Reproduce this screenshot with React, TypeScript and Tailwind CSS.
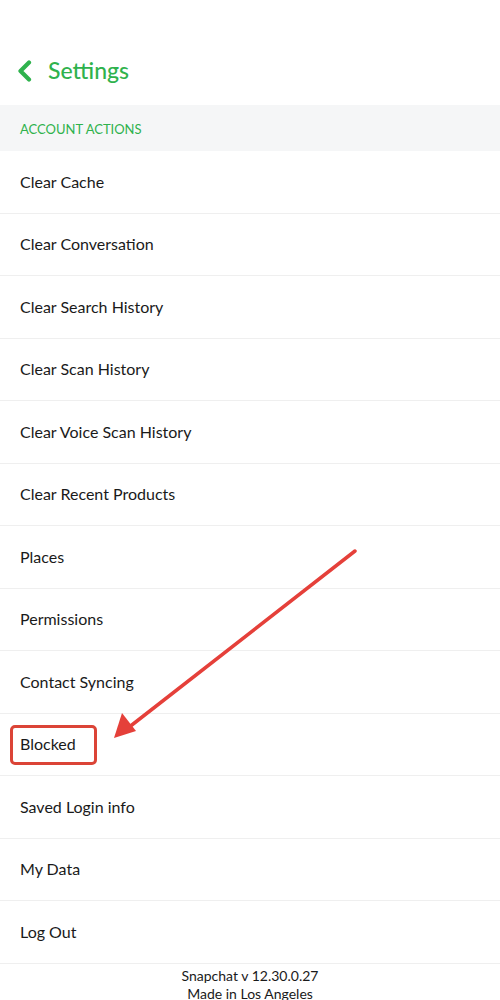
import React from 'react';

const ITEMS = [
  'Clear Cache',
  'Clear Conversation',
  'Clear Search History',
  'Clear Scan History',
  'Clear Voice Scan History',
  'Clear Recent Products',
  'Places',
  'Permissions',
  'Contact Syncing',
  'Blocked',
  'Saved Login info',
  'My Data',
  'Log Out',
];

export default function App() {
  return (
    <div className="relative w-[500px] h-[1000px] overflow-hidden bg-white font-['Lato','Noto_Sans',sans-serif] text-[#1a1a1a]">
      {/* Header */}
      <div className="h-[105px] flex items-end pb-[23px] pl-[17px]">
        <div className="flex items-center gap-[16px]">
          <svg width="15" height="22" viewBox="0 0 15 22" fill="none">
            <path d="M12 2.5 L3.5 11 L12 19.5" stroke="#2fb24d" strokeWidth="4.2" strokeLinecap="round" strokeLinejoin="round" />
          </svg>
          <span className="text-[23px] leading-none text-[#2fb24d] font-medium">Settings</span>
        </div>
      </div>

      {/* Section */}
      <div className="h-[46px] bg-[#f5f6f7] flex items-center pl-[20px] pt-[3px] text-[13px] text-[#2fb24d]">
        ACCOUNT ACTIONS
      </div>

      <div className="flex flex-col">
        {ITEMS.map((item) => (
          <div key={item} className="h-[62.5px] flex items-center pl-[20px] border-b border-[#efefef] text-[16px]">
            {item}
          </div>
        ))}
      </div>

      <div className="flex flex-col items-center pt-[3px] text-[14px] leading-[18px] text-[#1a1a1a]">
        <span>Snapchat v 12.30.0.27</span>
        <span>Made in Los Angeles</span>
      </div>

      {/* Annotation */}
      <div className="absolute left-[10px] top-[725px] w-[87px] h-[40px] border-[3.5px] border-[#db4437] rounded-[5px]" />
      <svg className="absolute left-0 top-0 pointer-events-none" width="500" height="1000">
        <line x1="355" y1="551" x2="128" y2="728" stroke="#e5403a" strokeWidth="3.5" strokeLinecap="round" />
        <polygon points="114,738 122,713 136,731" fill="#e5403a" />
      </svg>
    </div>
  );
}
